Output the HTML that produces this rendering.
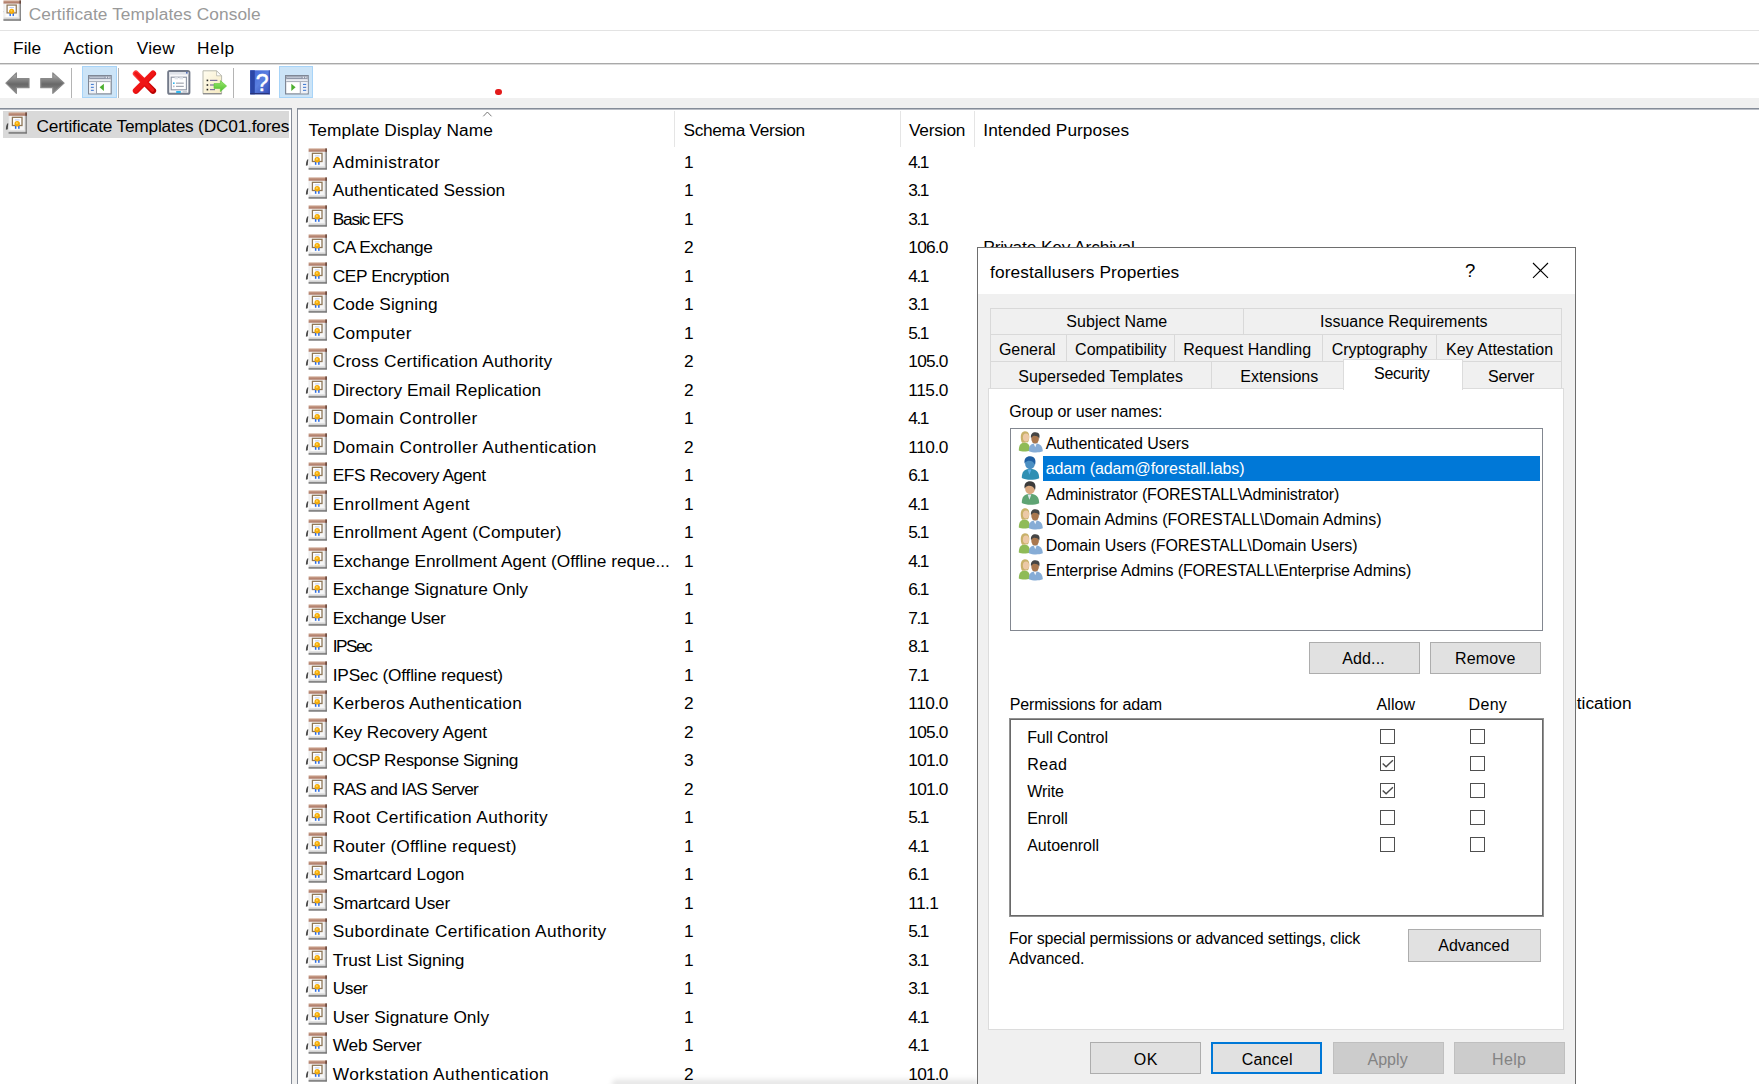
<!DOCTYPE html>
<html><head><meta charset="utf-8"><title>Certificate Templates Console</title>
<style>
html,body{margin:0;padding:0;}
body{width:1759px;height:1084px;overflow:hidden;position:relative;background:#fff;font-family:"Liberation Sans", sans-serif;font-size:17.3px;color:#000;}
body div,body span.t,body svg{position:absolute;}
svg{overflow:visible;}
span.t{white-space:pre;line-height:24px;height:24px;}
#dlg span.t{font-size:16.0px;}
#main,#dlg{left:0;top:0;width:1759px;height:1084px;overflow:hidden;}
</style></head><body>
<svg width="0" height="0" style="position:absolute"><defs>
<linearGradient id="gBand" x1="0" y1="0" x2="0" y2="1"><stop offset="0" stop-color="#cfa893"/><stop offset="1" stop-color="#a66f5c"/></linearGradient>
<linearGradient id="gBase" x1="0" y1="0" x2="0" y2="1"><stop offset="0" stop-color="#f6f6f6"/><stop offset="1" stop-color="#b4b4b4"/></linearGradient>
<linearGradient id="gBody" x1="0" y1="0" x2="1" y2="0"><stop offset="0" stop-color="#e9e9e9"/><stop offset="0.2" stop-color="#fff"/><stop offset="0.85" stop-color="#f4f4f4"/><stop offset="1" stop-color="#cfcfcf"/></linearGradient>
<linearGradient id="gArrow" x1="0" y1="0" x2="0" y2="1"><stop offset="0" stop-color="#b4b4b4"/><stop offset="0.55" stop-color="#686868"/><stop offset="1" stop-color="#8c8c8c"/></linearGradient>
<linearGradient id="gRed" x1="0" y1="0" x2="1" y2="1"><stop offset="0" stop-color="#ff3b3b"/><stop offset="0.5" stop-color="#ee1010"/><stop offset="1" stop-color="#b80000"/></linearGradient>
<linearGradient id="gHelp" x1="0" y1="0" x2="1" y2="1"><stop offset="0" stop-color="#3f63d6"/><stop offset="0.5" stop-color="#5a7fe0"/><stop offset="1" stop-color="#3249b4"/></linearGradient>
<linearGradient id="gPage" x1="0" y1="0" x2="1" y2="1"><stop offset="0" stop-color="#fffdf0"/><stop offset="1" stop-color="#f6e9c0"/></linearGradient>
<linearGradient id="gGreen" x1="0" y1="0" x2="0" y2="1"><stop offset="0" stop-color="#9be86e"/><stop offset="1" stop-color="#4fbf2f"/></linearGradient>
<symbol id="cert" viewBox="0 0 23 23" overflow="visible">
 <path d="M2.6 11.2 C1.2 12.5 1 15 0.9 17.8 L2.8 17.2 C2.9 15 3.1 13 3.6 11.6 Z" fill="#4a4a4a"/>
 <rect x="3.6" y="17.2" width="18.2" height="4.2" fill="url(#gBase)"/>
 <rect x="3.6" y="20.4" width="18.2" height="1.1" fill="#5f5f5f"/>
 <rect x="3.6" y="3.4" width="17.6" height="14.3" fill="url(#gBody)"/>
 <rect x="20.6" y="3" width="1.2" height="18.4" fill="#777"/>
 <rect x="3.6" y="0.4" width="18.2" height="3.3" fill="url(#gBand)"/>
 <rect x="20.4" y="0.4" width="1.4" height="3.3" fill="#5a3a30"/>
 <rect x="7.4" y="5.3" width="9.6" height="8.2" fill="#fff" stroke="#8d7556" stroke-width="1.3"/>
 <rect x="9.8" y="7.4" width="4.8" height="1" fill="#b7c8ee"/>
 <rect x="9.9" y="13.8" width="1.5" height="3" fill="#2b6be4"/>
 <rect x="13.1" y="13.8" width="1.5" height="3" fill="#2b6be4"/>
 <circle cx="12.2" cy="11.8" r="2.7" fill="#f3aa08"/>
 <circle cx="11.9" cy="11.2" r="1.1" fill="#ffd04a"/>
</symbol>
<symbol id="grp" viewBox="0 0 26 22" overflow="visible">
 <path d="M0.8 19.5 C0.8 14.5 2.5 11.8 6.5 11.5 C10.5 11.8 12 14.5 12 19.5 C9 20.8 3.5 20.8 0.8 19.5 Z" fill="#8fbb57"/>
 <path d="M3.4 10.4 C1.6 4.2 3.6 0.3 7 0.3 C10.6 0.3 12 3.6 11 8.8 L10 11.2 L4.2 11.8 Z" fill="#c8b16a"/>
 <ellipse cx="8" cy="6.6" rx="3.1" ry="4" fill="#ecc9a6"/>
 <path d="M10.8 20.2 C10.8 15 12.5 12.5 17.3 12.2 C22.5 12.5 24.6 15.5 24.8 20.3 C20.5 22 14.5 21.8 10.8 20.2 Z" fill="#86acd6"/>
 <path d="M15.6 12.6 L17.2 16.2 L18.8 12.6 Z" fill="#f4f6fa"/>
 <ellipse cx="17.1" cy="7.8" rx="3.8" ry="4.8" fill="#a9774e"/>
 <path d="M13 7.2 C12.3 2.8 14.8 1.1 17.6 1.3 C21 1.4 22.3 4 21.2 7.6 C20.2 5.2 17.9 4.6 15.8 4.8 C14.5 5.2 13.7 6.2 13 7.2 Z" fill="#454545"/>
</symbol>
<symbol id="usr" viewBox="0 0 20 24" overflow="visible">
 <path d="M0.8 22 C0.8 16 3 13.2 9 12.8 C15.5 13.2 18 16 18.2 22.2 C13 24.4 5 24.2 0.8 22 Z" fill="#5fa474"/>
 <path d="M6.6 13.4 L8.4 18.8 L10.4 13.4 Z" fill="#dfe7ee"/>
 <ellipse cx="9" cy="7.4" rx="4.9" ry="5.9" fill="#d9a981"/>
 <path d="M3.6 7.6 C2.8 2.4 5.6 0.1 9.2 0.2 C13.8 0.3 15.4 3.6 14 9 C13.2 5.8 10.4 4.5 7.4 4.7 C5.4 5.1 4.4 6.3 3.6 7.6 Z" fill="#3b3b3b"/>
</symbol>
<symbol id="usrsel" viewBox="0 0 20 24" overflow="visible">
 <path d="M0.8 22 C0.8 16 3 13.2 9 12.8 C15.5 13.2 18 16 18.2 22.2 C13 24.4 5 24.2 0.8 22 Z" fill="#2f8fb3"/>
 <path d="M6.6 13.4 L8.4 18.8 L10.4 13.4 Z" fill="#5fb0e6"/>
 <ellipse cx="9" cy="7.4" rx="4.9" ry="5.9" fill="#4c8fc2"/>
 <path d="M3.6 7.6 C2.8 2.4 5.6 0.1 9.2 0.2 C13.8 0.3 15.4 3.6 14 9 C13.2 5.8 10.4 4.5 7.4 4.7 C5.4 5.1 4.4 6.3 3.6 7.6 Z" fill="#1f5fa3"/>
</symbol>
</defs></svg>
<div id="main">
<div style="left:2.6px;top:0;width:20px;height:22px;overflow:hidden"><svg style="left:-3.1px;top:-0.4px" width="22" height="22"><use href="#cert"/></svg></div>
<div style="left:0px;top:30px;width:1759px;height:1px;background:#e3e3e3;"></div>
<div style="left:0px;top:63px;width:1759px;height:1px;background:#a9a9a9;"></div>
<div style="left:0px;top:64px;width:1759px;height:1px;background:#dcdcdc;"></div>
<div style="left:71.3px;top:67.5px;width:1px;height:30px;background:#b4b4b4;"></div>
<div style="left:117.9px;top:67.5px;width:1px;height:30px;background:#b4b4b4;"></div>
<div style="left:233.3px;top:67.5px;width:1px;height:30px;background:#b4b4b4;"></div>
<div style="left:82px;top:66px;width:34.5px;height:32px;background:#cce4f7;box-sizing:border-box;border:1px solid #a8d4f8"></div>
<div style="left:278.6px;top:66px;width:34.5px;height:32px;background:#cce4f7;box-sizing:border-box;border:1px solid #a8d4f8"></div>
<svg style="left:5px;top:71px" width="25" height="24" viewBox="0 0 25 24"><path d="M0.9 12.1 L11.4 1.9 L11.4 7.5 L24 7.5 L24 16.7 L11.4 16.7 L11.4 22.3 Z" fill="url(#gArrow)" stroke="#8a8a8a" stroke-width="1.2" stroke-linejoin="round"/></svg><svg style="left:39.7px;top:71px" width="25" height="24" viewBox="0 0 25 24"><path d="M24.1 12.1 L12.8 1.9 L12.8 7.5 L0.8 7.5 L0.8 16.7 L12.8 16.7 L12.8 22.3 Z" fill="url(#gArrow)" stroke="#8a8a8a" stroke-width="1.2" stroke-linejoin="round"/></svg><svg style="left:88.1px;top:74.9px" width="24" height="20" viewBox="0 0 24 20"><rect x="0.6" y="0.6" width="22.6" height="18.3" fill="#fff" stroke="#7f8795" stroke-width="1.2"/><rect x="1.2" y="1.2" width="21.4" height="3.2" fill="#8f97a8"/><rect x="2" y="1.9" width="14.5" height="0.9" fill="#c9cfdb"/><rect x="17.7" y="1.7" width="1.3" height="1.5" fill="#e6e9f0"/><rect x="20.2" y="1.7" width="1.3" height="1.5" fill="#e6e9f0"/><rect x="1.2" y="4.4" width="21.4" height="2" fill="#e9ecf2"/><rect x="1.2" y="6.2" width="21.4" height="0.9" fill="#9aa1af"/><rect x="1.2" y="7.1" width="7" height="11.2" fill="#eef1f7"/><rect x="8" y="7.1" width="0.9" height="11.2" fill="#8d95a4"/><rect x="2.9" y="8.9" width="2.9" height="1.1" fill="#477fd3"/><rect x="2.9" y="11.8" width="2.9" height="1.1" fill="#477fd3"/><rect x="2.9" y="14.8" width="2.9" height="1.1" fill="#477fd3"/><path d="M11.6 12.3 L15.9 8.8 L15.9 15.9 Z" fill="#4caf2f"/></svg><svg style="left:284.6px;top:74.9px" width="24" height="20" viewBox="0 0 24 20"><rect x="0.6" y="0.6" width="22.6" height="18.3" fill="#fff" stroke="#7f8795" stroke-width="1.2"/><rect x="1.2" y="1.2" width="21.4" height="3.2" fill="#8f97a8"/><rect x="2" y="1.9" width="14.5" height="0.9" fill="#c9cfdb"/><rect x="17.7" y="1.7" width="1.3" height="1.5" fill="#e6e9f0"/><rect x="20.2" y="1.7" width="1.3" height="1.5" fill="#e6e9f0"/><rect x="1.2" y="4.4" width="21.4" height="2" fill="#e9ecf2"/><rect x="1.2" y="6.2" width="21.4" height="0.9" fill="#9aa1af"/><rect x="15.6" y="7.1" width="7" height="11.2" fill="#eef1f7"/><rect x="14.8" y="7.1" width="0.9" height="11.2" fill="#8d95a4"/><rect x="18" y="8.9" width="3.2" height="1.1" fill="#477fd3"/><rect x="18" y="11.8" width="3.2" height="1.1" fill="#477fd3"/><rect x="18" y="14.8" width="3.2" height="1.1" fill="#477fd3"/><path d="M10.6 12.3 L6.3 8.8 L6.3 15.9 Z" fill="#4caf2f"/></svg><svg style="left:132px;top:70px" width="25" height="25" viewBox="0 0 25 25"><path d="M3.9 3.6 L21 20.7 M21 3.6 L3.9 20.7" fill="none" stroke="url(#gRed)" stroke-width="6.2" stroke-linecap="round"/><path d="M3.9 3.6 L20.4 20.1 M20.6 3.8 L3.9 20.5" fill="none" stroke="#ee1515" stroke-width="3.6" stroke-linecap="round"/></svg><svg style="left:167px;top:70px" width="24" height="25" viewBox="0 0 24 25"><rect x="1.2" y="1" width="21.2" height="22.8" rx="1.6" fill="#f7f8fa" stroke="#737a89" stroke-width="2"/><rect x="2.2" y="2" width="19.2" height="2.6" fill="#dfe3ea"/><rect x="19" y="2" width="1.6" height="1.6" fill="#5470b8"/><rect x="4.2" y="7.2" width="15.2" height="12.6" fill="#fff" stroke="#8c94a3" stroke-width="1.1"/><rect x="7.6" y="7.2" width="3.6" height="2.2" fill="#e1e5ec"/><rect x="12.4" y="7.2" width="3.6" height="2.2" fill="#e1e5ec"/><rect x="6" y="12.4" width="1.6" height="1.6" fill="#2fb6ee"/><rect x="9" y="12.6" width="7.8" height="1.1" fill="#9a9fa9"/><rect x="6" y="15.6" width="1.6" height="1.6" fill="#b9bec8"/><rect x="9" y="15.8" width="7.8" height="1.1" fill="#9a9fa9"/><rect x="9.2" y="21" width="4.6" height="2" fill="#2fb6ee"/><rect x="15.6" y="21" width="4.4" height="2" fill="#c9cdd5"/></svg><svg style="left:201.5px;top:70px" width="26" height="25" viewBox="0 0 26 25"><path d="M1 0.8 L14.6 0.8 L19.6 5.8 L19.6 23.8 L1 23.8 Z" fill="url(#gPage)" stroke="#b9b9ad" stroke-width="1"/><path d="M14.6 0.8 L14.6 5.8 L19.6 5.8 Z" fill="#fff" stroke="#b9b9ad" stroke-width="0.8"/><rect x="1" y="23" width="18.6" height="1.3" fill="#8f8f8f"/><rect x="4.6" y="9.6" width="1.6" height="1.6" fill="#222"/><rect x="8" y="9.8" width="7.4" height="1.2" fill="#7d739f"/><rect x="4.6" y="14.2" width="1.6" height="1.6" fill="#222"/><rect x="8" y="14.4" width="5" height="1.2" fill="#7d739f"/><rect x="4.6" y="18.8" width="1.6" height="1.6" fill="#222"/><rect x="8" y="19" width="5" height="1.2" fill="#7d739f"/><path d="M12 13.6 L18.4 13.6 L18.4 10.6 L24.6 16 L18.4 21.6 L18.4 18.4 L12 18.4 Z" fill="url(#gGreen)" stroke="#58c436" stroke-width="0.6"/></svg><svg style="left:249.7px;top:70.3px" width="20" height="25" viewBox="0 0 20 25"><rect x="0.2" y="0.3" width="19.6" height="24" fill="url(#gHelp)"/><rect x="0.2" y="0.3" width="4.6" height="24" fill="#2b46a6"/><rect x="0.2" y="23" width="19.6" height="1.3" fill="#27337a"/><rect x="18.8" y="0.3" width="1" height="24" fill="#2f45a8"/><text x="12.2" y="20.6" text-anchor="middle" font-family="Liberation Sans, sans-serif" font-size="23" fill="#fff" stroke="#fff" stroke-width="0.5">?</text></svg>
<div style="left:495.2px;top:88.7px;width:6.4px;height:6.4px;background:#e31a1a;border-radius:50%"></div>
<div style="left:0px;top:98.2px;width:1759px;height:9.8px;background:#f0f0f0;"></div>
<div style="left:292px;top:108px;width:4.6px;height:976px;background:#f0f0f0;"></div>
<div style="left:0px;top:108px;width:292px;height:1px;background:#858c98;"></div>
<div style="left:0px;top:109px;width:291px;height:1px;background:#b9bdc5;"></div>
<div style="left:290.5px;top:108px;width:1.5px;height:976px;background:#858c98;"></div>
<div style="left:296.6px;top:108px;width:1463px;height:1px;background:#858c98;"></div>
<div style="left:298px;top:109px;width:1461px;height:1px;background:#b9bdc5;"></div>
<div style="left:296.6px;top:108px;width:1.4px;height:976px;background:#858c98;"></div>
<div style="left:2.6px;top:111.2px;width:286.4px;height:26.6px;background:#d9d9d9;"></div>
<svg style="left:4.6px;top:112.4px" width="23" height="23"><use href="#cert"/></svg>
<div style="left:674px;top:110.5px;width:1px;height:36.5px;background:#e5e5e5;"></div>
<div style="left:899.5px;top:110.5px;width:1px;height:36.5px;background:#e5e5e5;"></div>
<div style="left:974.3px;top:110.5px;width:1px;height:36.5px;background:#e5e5e5;"></div>
<svg style="left:482px;top:110px" width="11" height="8"><path d="M1.3 6.3 L5.4 2 L9.5 6.3" fill="none" stroke="#777" stroke-width="1"/></svg>
<svg style="left:304.5px;top:148.4px" width="23" height="23"><use href="#cert"/></svg>
<svg style="left:304.5px;top:176.9px" width="23" height="23"><use href="#cert"/></svg>
<svg style="left:304.5px;top:205.4px" width="23" height="23"><use href="#cert"/></svg>
<svg style="left:304.5px;top:233.9px" width="23" height="23"><use href="#cert"/></svg>
<svg style="left:304.5px;top:262.4px" width="23" height="23"><use href="#cert"/></svg>
<svg style="left:304.5px;top:290.9px" width="23" height="23"><use href="#cert"/></svg>
<svg style="left:304.5px;top:319.4px" width="23" height="23"><use href="#cert"/></svg>
<svg style="left:304.5px;top:347.9px" width="23" height="23"><use href="#cert"/></svg>
<svg style="left:304.5px;top:376.4px" width="23" height="23"><use href="#cert"/></svg>
<svg style="left:304.5px;top:404.9px" width="23" height="23"><use href="#cert"/></svg>
<svg style="left:304.5px;top:433.4px" width="23" height="23"><use href="#cert"/></svg>
<svg style="left:304.5px;top:461.9px" width="23" height="23"><use href="#cert"/></svg>
<svg style="left:304.5px;top:490.4px" width="23" height="23"><use href="#cert"/></svg>
<svg style="left:304.5px;top:518.9px" width="23" height="23"><use href="#cert"/></svg>
<svg style="left:304.5px;top:547.4px" width="23" height="23"><use href="#cert"/></svg>
<svg style="left:304.5px;top:575.9px" width="23" height="23"><use href="#cert"/></svg>
<svg style="left:304.5px;top:604.4px" width="23" height="23"><use href="#cert"/></svg>
<svg style="left:304.5px;top:632.9px" width="23" height="23"><use href="#cert"/></svg>
<svg style="left:304.5px;top:661.4px" width="23" height="23"><use href="#cert"/></svg>
<svg style="left:304.5px;top:689.9px" width="23" height="23"><use href="#cert"/></svg>
<svg style="left:304.5px;top:718.4px" width="23" height="23"><use href="#cert"/></svg>
<svg style="left:304.5px;top:746.9px" width="23" height="23"><use href="#cert"/></svg>
<svg style="left:304.5px;top:775.4px" width="23" height="23"><use href="#cert"/></svg>
<svg style="left:304.5px;top:803.9px" width="23" height="23"><use href="#cert"/></svg>
<svg style="left:304.5px;top:832.4px" width="23" height="23"><use href="#cert"/></svg>
<svg style="left:304.5px;top:860.9px" width="23" height="23"><use href="#cert"/></svg>
<svg style="left:304.5px;top:889.4px" width="23" height="23"><use href="#cert"/></svg>
<svg style="left:304.5px;top:917.9px" width="23" height="23"><use href="#cert"/></svg>
<svg style="left:304.5px;top:946.4px" width="23" height="23"><use href="#cert"/></svg>
<svg style="left:304.5px;top:974.9px" width="23" height="23"><use href="#cert"/></svg>
<svg style="left:304.5px;top:1003.4px" width="23" height="23"><use href="#cert"/></svg>
<svg style="left:304.5px;top:1031.9px" width="23" height="23"><use href="#cert"/></svg>
<svg style="left:304.5px;top:1060.4px" width="23" height="23"><use href="#cert"/></svg>
<div style="left:612px;top:1077px;width:366px;height:9px;background:linear-gradient(to bottom, rgba(0,0,0,0), rgba(0,0,0,0.16));filter:blur(2.5px);border-radius:8px 0 0 0"></div>
<span class="t" style="left:28.7px;top:2px;color:#999;letter-spacing:0.097px;">Certificate Templates Console</span>
<span class="t" style="left:13.0px;top:36px;letter-spacing:0.070px;">File</span>
<span class="t" style="left:63.5px;top:36px;letter-spacing:0.368px;">Action</span>
<span class="t" style="left:136.7px;top:36px;letter-spacing:0.305px;">View</span>
<span class="t" style="left:197.1px;top:36px;letter-spacing:0.475px;">Help</span>
<span class="t" style="left:36.5px;top:114px;letter-spacing:-0.192px;">Certificate Templates (DC01.fores</span>
<span class="t" style="left:308.6px;top:118px;letter-spacing:0.089px;">Template Display Name</span>
<span class="t" style="left:683.5px;top:118px;letter-spacing:-0.321px;">Schema Version</span>
<span class="t" style="left:908.9px;top:118px;letter-spacing:-0.178px;">Version</span>
<span class="t" style="left:983.3px;top:118px;letter-spacing:0.050px;">Intended Purposes</span>
<span class="t" style="left:332.7px;top:150px;letter-spacing:0.447px;">Administrator</span>
<span class="t" style="left:683.9px;top:150px;">1</span>
<span class="t" style="left:908.3px;top:150px;letter-spacing:-1.480px;">4.1</span>
<span class="t" style="left:332.7px;top:178px;letter-spacing:0.025px;">Authenticated Session</span>
<span class="t" style="left:683.9px;top:178px;">1</span>
<span class="t" style="left:908.3px;top:178px;letter-spacing:-1.480px;">3.1</span>
<span class="t" style="left:332.7px;top:207px;letter-spacing:-1.188px;">Basic EFS</span>
<span class="t" style="left:683.9px;top:207px;">1</span>
<span class="t" style="left:908.3px;top:207px;letter-spacing:-1.480px;">3.1</span>
<span class="t" style="left:332.7px;top:235px;letter-spacing:-0.465px;">CA Exchange</span>
<span class="t" style="left:683.9px;top:235px;">2</span>
<span class="t" style="left:908.3px;top:235px;letter-spacing:-0.770px;">106.0</span>
<span class="t" style="left:332.7px;top:264px;letter-spacing:-0.369px;">CEP Encryption</span>
<span class="t" style="left:683.9px;top:264px;">1</span>
<span class="t" style="left:908.3px;top:264px;letter-spacing:-1.480px;">4.1</span>
<span class="t" style="left:332.7px;top:292px;letter-spacing:0.100px;">Code Signing</span>
<span class="t" style="left:683.9px;top:292px;">1</span>
<span class="t" style="left:908.3px;top:292px;letter-spacing:-1.480px;">3.1</span>
<span class="t" style="left:332.7px;top:321px;letter-spacing:0.411px;">Computer</span>
<span class="t" style="left:683.9px;top:321px;">1</span>
<span class="t" style="left:908.3px;top:321px;letter-spacing:-1.480px;">5.1</span>
<span class="t" style="left:332.7px;top:349px;letter-spacing:0.223px;">Cross Certification Authority</span>
<span class="t" style="left:683.9px;top:349px;">2</span>
<span class="t" style="left:908.3px;top:349px;letter-spacing:-0.770px;">105.0</span>
<span class="t" style="left:332.7px;top:378px;letter-spacing:0.039px;">Directory Email Replication</span>
<span class="t" style="left:683.9px;top:378px;">2</span>
<span class="t" style="left:908.3px;top:378px;letter-spacing:-0.450px;">115.0</span>
<span class="t" style="left:332.7px;top:406px;letter-spacing:0.332px;">Domain Controller</span>
<span class="t" style="left:683.9px;top:406px;">1</span>
<span class="t" style="left:908.3px;top:406px;letter-spacing:-1.480px;">4.1</span>
<span class="t" style="left:332.7px;top:435px;letter-spacing:0.359px;">Domain Controller Authentication</span>
<span class="t" style="left:683.9px;top:435px;">2</span>
<span class="t" style="left:908.3px;top:435px;letter-spacing:-0.450px;">110.0</span>
<span class="t" style="left:332.7px;top:463px;letter-spacing:-0.421px;">EFS Recovery Agent</span>
<span class="t" style="left:683.9px;top:463px;">1</span>
<span class="t" style="left:908.3px;top:463px;letter-spacing:-1.480px;">6.1</span>
<span class="t" style="left:332.7px;top:492px;letter-spacing:0.357px;">Enrollment Agent</span>
<span class="t" style="left:683.9px;top:492px;">1</span>
<span class="t" style="left:908.3px;top:492px;letter-spacing:-1.480px;">4.1</span>
<span class="t" style="left:332.7px;top:520px;letter-spacing:0.191px;">Enrollment Agent (Computer)</span>
<span class="t" style="left:683.9px;top:520px;">1</span>
<span class="t" style="left:908.3px;top:520px;letter-spacing:-1.480px;">5.1</span>
<span class="t" style="left:332.7px;top:549px;letter-spacing:0.007px;">Exchange Enrollment Agent (Offline reque...</span>
<span class="t" style="left:683.9px;top:549px;">1</span>
<span class="t" style="left:908.3px;top:549px;letter-spacing:-1.480px;">4.1</span>
<span class="t" style="left:332.7px;top:577px;letter-spacing:-0.032px;">Exchange Signature Only</span>
<span class="t" style="left:683.9px;top:577px;">1</span>
<span class="t" style="left:908.3px;top:577px;letter-spacing:-1.480px;">6.1</span>
<span class="t" style="left:332.7px;top:606px;letter-spacing:-0.432px;">Exchange User</span>
<span class="t" style="left:683.9px;top:606px;">1</span>
<span class="t" style="left:908.3px;top:606px;letter-spacing:-1.480px;">7.1</span>
<span class="t" style="left:332.7px;top:634px;letter-spacing:-1.510px;">IPSec</span>
<span class="t" style="left:683.9px;top:634px;">1</span>
<span class="t" style="left:908.3px;top:634px;letter-spacing:-1.480px;">8.1</span>
<span class="t" style="left:332.7px;top:663px;letter-spacing:-0.188px;">IPSec (Offline request)</span>
<span class="t" style="left:683.9px;top:663px;">1</span>
<span class="t" style="left:908.3px;top:663px;letter-spacing:-1.480px;">7.1</span>
<span class="t" style="left:332.7px;top:691px;letter-spacing:0.253px;">Kerberos Authentication</span>
<span class="t" style="left:683.9px;top:691px;">2</span>
<span class="t" style="left:908.3px;top:691px;letter-spacing:-0.450px;">110.0</span>
<span class="t" style="left:332.7px;top:720px;letter-spacing:-0.124px;">Key Recovery Agent</span>
<span class="t" style="left:683.9px;top:720px;">2</span>
<span class="t" style="left:908.3px;top:720px;letter-spacing:-0.770px;">105.0</span>
<span class="t" style="left:332.7px;top:748px;letter-spacing:-0.408px;">OCSP Response Signing</span>
<span class="t" style="left:683.9px;top:748px;">3</span>
<span class="t" style="left:908.3px;top:748px;letter-spacing:-0.770px;">101.0</span>
<span class="t" style="left:332.7px;top:777px;letter-spacing:-0.668px;">RAS and IAS Server</span>
<span class="t" style="left:683.9px;top:777px;">2</span>
<span class="t" style="left:908.3px;top:777px;letter-spacing:-0.770px;">101.0</span>
<span class="t" style="left:332.7px;top:805px;letter-spacing:0.381px;">Root Certification Authority</span>
<span class="t" style="left:683.9px;top:805px;">1</span>
<span class="t" style="left:908.3px;top:805px;letter-spacing:-1.480px;">5.1</span>
<span class="t" style="left:332.7px;top:834px;letter-spacing:0.152px;">Router (Offline request)</span>
<span class="t" style="left:683.9px;top:834px;">1</span>
<span class="t" style="left:908.3px;top:834px;letter-spacing:-1.480px;">4.1</span>
<span class="t" style="left:332.7px;top:862px;letter-spacing:-0.058px;">Smartcard Logon</span>
<span class="t" style="left:683.9px;top:862px;">1</span>
<span class="t" style="left:908.3px;top:862px;letter-spacing:-1.480px;">6.1</span>
<span class="t" style="left:332.7px;top:891px;letter-spacing:-0.271px;">Smartcard User</span>
<span class="t" style="left:683.9px;top:891px;">1</span>
<span class="t" style="left:908.3px;top:891px;letter-spacing:-0.630px;">11.1</span>
<span class="t" style="left:332.7px;top:919px;letter-spacing:0.358px;">Subordinate Certification Authority</span>
<span class="t" style="left:683.9px;top:919px;">1</span>
<span class="t" style="left:908.3px;top:919px;letter-spacing:-1.480px;">5.1</span>
<span class="t" style="left:332.7px;top:948px;letter-spacing:-0.065px;">Trust List Signing</span>
<span class="t" style="left:683.9px;top:948px;">1</span>
<span class="t" style="left:908.3px;top:948px;letter-spacing:-1.480px;">3.1</span>
<span class="t" style="left:332.7px;top:976px;letter-spacing:-0.443px;">User</span>
<span class="t" style="left:683.9px;top:976px;">1</span>
<span class="t" style="left:908.3px;top:976px;letter-spacing:-1.480px;">3.1</span>
<span class="t" style="left:332.7px;top:1005px;letter-spacing:0.042px;">User Signature Only</span>
<span class="t" style="left:683.9px;top:1005px;">1</span>
<span class="t" style="left:908.3px;top:1005px;letter-spacing:-1.480px;">4.1</span>
<span class="t" style="left:332.7px;top:1033px;letter-spacing:-0.206px;">Web Server</span>
<span class="t" style="left:683.9px;top:1033px;">1</span>
<span class="t" style="left:908.3px;top:1033px;letter-spacing:-1.480px;">4.1</span>
<span class="t" style="left:332.7px;top:1062px;letter-spacing:0.467px;">Workstation Authentication</span>
<span class="t" style="left:683.9px;top:1062px;">2</span>
<span class="t" style="left:908.3px;top:1062px;letter-spacing:-0.770px;">101.0</span>
<span class="t" style="left:983.3px;top:235px;letter-spacing:-0.117px;">Private Key Archival</span>
<span class="t" style="right:127.5px;top:691px;">Client Authentication, Server Authentication, Smart Card Logon, KDC Authentication</span>
</div>
<div id="dlg">
<div style="left:977px;top:247px;width:597px;height:860px;background:#f0f0f0;border:1px solid #6e6e6e"></div>
<div style="left:978px;top:248px;width:597px;height:45.7px;background:#fff;"></div>
<svg style="left:1532px;top:262px" width="17" height="17"><path d="M1 1 L16 15.9 M16 1 L1 15.9" stroke="#000" stroke-width="1.1" fill="none"/></svg>
<div style="left:990.3px;top:307.9px;width:253.5px;height:26.200000000000045px;background:#f0f0f0;box-sizing:border-box;border:1px solid #d9d9d9;border-bottom:none"></div>
<div style="left:1242.8px;top:307.9px;width:318.79999999999995px;height:26.200000000000045px;background:#f0f0f0;box-sizing:border-box;border:1px solid #d9d9d9;border-bottom:none"></div>
<div style="left:990.3px;top:334.1px;width:76.29999999999995px;height:27.299999999999955px;background:#f0f0f0;box-sizing:border-box;border:1px solid #d9d9d9;border-bottom:none"></div>
<div style="left:1065.6px;top:334.1px;width:109.0px;height:27.299999999999955px;background:#f0f0f0;box-sizing:border-box;border:1px solid #d9d9d9;border-bottom:none"></div>
<div style="left:1173.6px;top:334.1px;width:149.5px;height:27.299999999999955px;background:#f0f0f0;box-sizing:border-box;border:1px solid #d9d9d9;border-bottom:none"></div>
<div style="left:1322.1px;top:334.1px;width:114.5px;height:27.299999999999955px;background:#f0f0f0;box-sizing:border-box;border:1px solid #d9d9d9;border-bottom:none"></div>
<div style="left:1435.6px;top:334.1px;width:126.0px;height:27.299999999999955px;background:#f0f0f0;box-sizing:border-box;border:1px solid #d9d9d9;border-bottom:none"></div>
<div style="left:990.3px;top:361.4px;width:221.60000000000014px;height:26.80000000000001px;background:#f0f0f0;box-sizing:border-box;border:1px solid #d9d9d9;border-bottom:none"></div>
<div style="left:1210.9px;top:361.4px;width:133.0999999999999px;height:26.80000000000001px;background:#f0f0f0;box-sizing:border-box;border:1px solid #d9d9d9;border-bottom:none"></div>
<div style="left:1462px;top:361.4px;width:99.59999999999991px;height:26.80000000000001px;background:#f0f0f0;box-sizing:border-box;border:1px solid #d9d9d9;border-bottom:none"></div>
<div style="left:987.5px;top:388.2px;width:576.8px;height:642.1px;background:#fff;box-sizing:border-box;border:1px solid #dcdcdc"></div>
<div style="left:1342.5px;top:359px;width:120px;height:31px;background:#fff;box-sizing:border-box;border:1px solid #dcdcdc;border-bottom:none"></div>
<div style="left:1009.9px;top:428px;width:533.4px;height:202.7px;background:#fff;box-sizing:border-box;border:1px solid #828790"></div>
<div style="left:1042.5px;top:455.7px;width:497.9px;height:25.8px;background:#0078d7;"></div>
<svg style="left:1017.6px;top:431.4px" width="26" height="22"><use href="#grp"/></svg>
<svg style="left:1020.6px;top:455.5px" width="20" height="24"><use href="#usrsel"/></svg>
<svg style="left:1020.6px;top:481.0px" width="20" height="24"><use href="#usr"/></svg>
<svg style="left:1017.6px;top:507.9px" width="26" height="22"><use href="#grp"/></svg>
<svg style="left:1017.6px;top:533.4px" width="26" height="22"><use href="#grp"/></svg>
<svg style="left:1017.6px;top:558.9px" width="26" height="22"><use href="#grp"/></svg>
<div style="left:1309px;top:641.6px;width:110.59999999999991px;height:32.39999999999998px;background:#e1e1e1;box-sizing:border-box;border:1px solid #adadad"></div>
<div style="left:1430.2px;top:641.6px;width:110.89999999999986px;height:32.39999999999998px;background:#e1e1e1;box-sizing:border-box;border:1px solid #adadad"></div>
<div style="left:1009px;top:718px;width:535px;height:199px;background:#fff;box-sizing:border-box;border:1px solid #929292"></div>
<div style="left:1010px;top:719px;width:533px;height:197px;background:#fff;box-sizing:border-box;border:1px solid #696969"></div>
<div style="left:1380px;top:729px;width:15px;height:15px;background:#fff;box-sizing:border-box;border:1px solid #4f4f4f"></div>
<div style="left:1470px;top:729px;width:15px;height:15px;background:#fff;box-sizing:border-box;border:1px solid #4f4f4f"></div>
<div style="left:1380px;top:756px;width:15px;height:15px;background:#fff;box-sizing:border-box;border:1px solid #4f4f4f"></div>
<svg style="left:1380px;top:756px" width="15" height="15"><path d="M2.7 7.4 L6.1 10.7 L12.9 4.2" fill="none" stroke="#4a4a4a" stroke-width="1.4"/></svg>
<div style="left:1470px;top:756px;width:15px;height:15px;background:#fff;box-sizing:border-box;border:1px solid #4f4f4f"></div>
<div style="left:1380px;top:783px;width:15px;height:15px;background:#fff;box-sizing:border-box;border:1px solid #4f4f4f"></div>
<svg style="left:1380px;top:783px" width="15" height="15"><path d="M2.7 7.4 L6.1 10.7 L12.9 4.2" fill="none" stroke="#4a4a4a" stroke-width="1.4"/></svg>
<div style="left:1470px;top:783px;width:15px;height:15px;background:#fff;box-sizing:border-box;border:1px solid #4f4f4f"></div>
<div style="left:1380px;top:810px;width:15px;height:15px;background:#fff;box-sizing:border-box;border:1px solid #4f4f4f"></div>
<div style="left:1470px;top:810px;width:15px;height:15px;background:#fff;box-sizing:border-box;border:1px solid #4f4f4f"></div>
<div style="left:1380px;top:837px;width:15px;height:15px;background:#fff;box-sizing:border-box;border:1px solid #4f4f4f"></div>
<div style="left:1470px;top:837px;width:15px;height:15px;background:#fff;box-sizing:border-box;border:1px solid #4f4f4f"></div>
<div style="left:1408px;top:929.3px;width:132.70000000000005px;height:32.80000000000007px;background:#e1e1e1;box-sizing:border-box;border:1px solid #adadad"></div>
<div style="left:1089.8px;top:1041.6px;width:111.10000000000014px;height:32.80000000000018px;background:#e1e1e1;box-sizing:border-box;border:1px solid #adadad"></div>
<div style="left:1211px;top:1041.6px;width:111.09999999999991px;height:32.80000000000018px;background:#e1e1e1;box-sizing:border-box;border:2px solid #0078d7"></div>
<div style="left:1332.5px;top:1041.6px;width:111.40000000000009px;height:32.80000000000018px;background:#cccccc;box-sizing:border-box;border:1px solid #bfbfbf"></div>
<div style="left:1453.7px;top:1041.6px;width:111.39999999999986px;height:32.80000000000018px;background:#cccccc;box-sizing:border-box;border:1px solid #bfbfbf"></div>
<span class="t" style="left:990.1px;top:260px;font-size:17.3px;letter-spacing:0.118px;">forestallusers Properties</span>
<span class="t" style="left:1465.1px;top:259px;font-size:18.5px;">?</span>
<span class="t" style="left:1066.3px;top:310px;letter-spacing:0.042px;">Subject Name</span>
<span class="t" style="left:1320.1px;top:310px;letter-spacing:-0.032px;">Issuance Requirements</span>
<span class="t" style="left:998.9px;top:338px;letter-spacing:-0.027px;">General</span>
<span class="t" style="left:1075.1px;top:338px;letter-spacing:-0.011px;">Compatibility</span>
<span class="t" style="left:1183.2px;top:338px;letter-spacing:0.050px;">Request Handling</span>
<span class="t" style="left:1331.8px;top:338px;letter-spacing:-0.053px;">Cryptography</span>
<span class="t" style="left:1446.0px;top:338px;letter-spacing:0.023px;">Key Attestation</span>
<span class="t" style="left:1018.3px;top:365px;letter-spacing:0.068px;">Superseded Templates</span>
<span class="t" style="left:1240.3px;top:365px;letter-spacing:-0.045px;">Extensions</span>
<span class="t" style="left:1488.1px;top:365px;letter-spacing:-0.193px;">Server</span>
<span class="t" style="left:1374.0px;top:362px;letter-spacing:-0.277px;">Security</span>
<span class="t" style="left:1009.2px;top:400px;letter-spacing:-0.119px;">Group or user names:</span>
<span class="t" style="left:1045.7px;top:432px;letter-spacing:-0.045px;">Authenticated Users</span>
<span class="t" style="left:1045.7px;top:457px;color:#fff;letter-spacing:-0.094px;">adam (adam@forestall.labs)</span>
<span class="t" style="left:1045.7px;top:483px;letter-spacing:-0.175px;">Administrator (FORESTALL\Administrator)</span>
<span class="t" style="left:1045.7px;top:508px;letter-spacing:-0.001px;">Domain Admins (FORESTALL\Domain Admins)</span>
<span class="t" style="left:1045.7px;top:534px;letter-spacing:-0.074px;">Domain Users (FORESTALL\Domain Users)</span>
<span class="t" style="left:1045.7px;top:559px;letter-spacing:-0.127px;">Enterprise Admins (FORESTALL\Enterprise Admins)</span>
<span class="t" style="left:1342.2px;top:647px;letter-spacing:0.150px;">Add...</span>
<span class="t" style="left:1455.0px;top:647px;letter-spacing:0.156px;">Remove</span>
<span class="t" style="left:1009.7px;top:693px;letter-spacing:-0.124px;">Permissions for adam</span>
<span class="t" style="left:1376.5px;top:693px;letter-spacing:0.081px;">Allow</span>
<span class="t" style="left:1468.6px;top:693px;letter-spacing:0.300px;">Deny</span>
<span class="t" style="left:1027.2px;top:726px;letter-spacing:-0.096px;">Full Control</span>
<span class="t" style="left:1027.2px;top:753px;letter-spacing:0.503px;">Read</span>
<span class="t" style="left:1027.2px;top:780px;letter-spacing:-0.072px;">Write</span>
<span class="t" style="left:1027.2px;top:807px;letter-spacing:-0.069px;">Enroll</span>
<span class="t" style="left:1027.2px;top:834px;letter-spacing:-0.021px;">Autoenroll</span>
<span class="t" style="left:1009.0px;top:927px;letter-spacing:-0.176px;">For special permissions or advanced settings, click</span>
<span class="t" style="left:1009.0px;top:947px;letter-spacing:-0.019px;">Advanced.</span>
<span class="t" style="left:1438.3px;top:934px;letter-spacing:-0.016px;">Advanced</span>
<span class="t" style="left:1133.8px;top:1048px;letter-spacing:0.435px;">OK</span>
<span class="t" style="left:1241.7px;top:1048px;letter-spacing:0.190px;">Cancel</span>
<span class="t" style="left:1367.4px;top:1048px;color:#838383;letter-spacing:0.082px;">Apply</span>
<span class="t" style="left:1492.1px;top:1048px;color:#838383;letter-spacing:0.318px;">Help</span>
</div>
</body></html>
